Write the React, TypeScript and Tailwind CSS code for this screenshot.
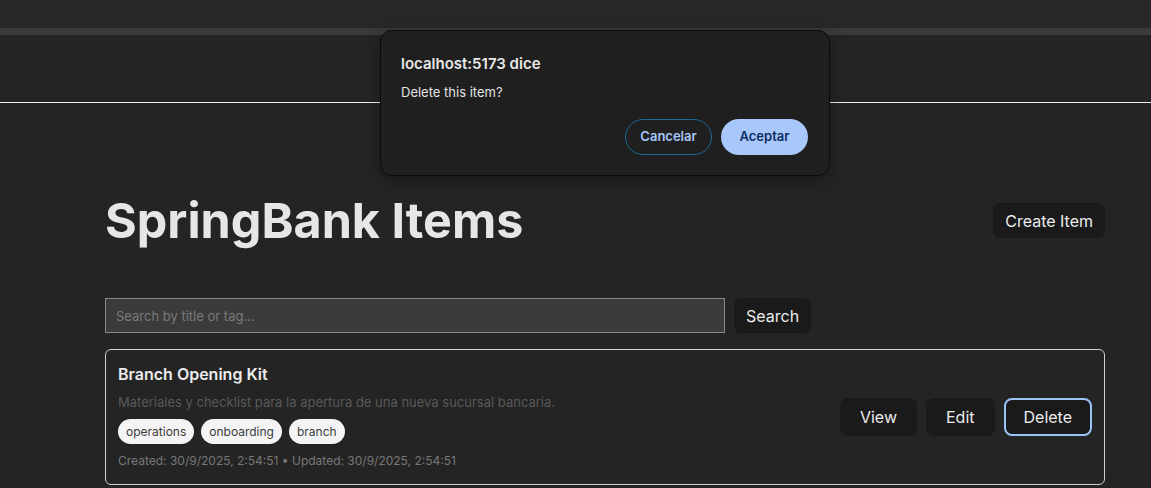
import { useState } from "react"

type Item = {
    id: number
    title: string
    description: string
    tags: string[]
    created: string
    updated: string
}

const items: Item[] = [
    {
        id: 1,
        title: 'Branch Opening Kit',
        description: 'Materiales y checklist para la apertura de una nueva sucursal bancaria.',
        tags: ['operations', 'onboarding', 'branch'],
        created: '30/9/2025, 2:54:51',
        updated: '30/9/2025, 2:54:51',
    },
]

function ConfirmDialog() {
    return (
        <div className="absolute left-[380px] top-[30px] w-[450px] h-[146px] rounded-[12px] bg-[#1f1f1f] border border-[#0b0b0b] shadow-[0_4px_16px_rgba(0,0,0,0.35)] px-[20px] pt-[22px]">
            <h2 className="text-[15px] font-semibold text-[#e8e8e8] leading-[22px]">localhost:5173 dice</h2>
            <p className="mt-[8px] text-[13px] text-[#e3e3e3] leading-[18px]">Delete this item?</p>
            <div className="flex justify-end gap-[9px] mt-[18px] pr-[1px]">
                <button className="w-[87px] h-[36px] rounded-full border border-[#1d6894] text-[#a8c7fa] text-[13px] font-semibold">
                    Cancelar
                </button>
                <button className="w-[87px] h-[36px] rounded-full bg-[#a8c7fa] text-[#0b2d63] text-[13px] font-semibold">
                    Aceptar
                </button>
            </div>
        </div>
    )
}

function ItemCard({ item }: { item: Item }) {
    return (
        <div className="flex items-center justify-between border border-[#cfcfcf] rounded-[6px] pl-[12px] pr-[12px] pt-[12px] pb-[14px]">
            <div>
                <h3 className="text-[16px] font-semibold text-[#ececec] leading-[24px]">{item.title}</h3>
                <p className="mt-[7px] text-[13px] text-[#595959] leading-[18px]">{item.description}</p>
                <div className="flex gap-[7px] mt-[8px]">
                    {item.tags.map(tag => (
                        <span
                            key={tag}
                            className="h-[25px] flex items-center px-[8px] rounded-full bg-[#f4f4f5] text-[#3b3b3b] text-[12px]"
                        >{tag}</span>
                    ))}
                </div>
                <p className="mt-[8px] text-[12px] text-[#787878] leading-[18px]">
                    Created: {item.created} • Updated: {item.updated}
                </p>
            </div>

            <div className="flex gap-[9px] mt-[1px]">
                <button className="h-[38px] px-[19px] rounded-[8px] bg-[#1a1a1a] text-[16px] text-[#ececec] border border-transparent">View</button>
                <button className="h-[38px] px-[19px] rounded-[8px] bg-[#1a1a1a] text-[16px] text-[#ececec] border border-transparent">Edit</button>
                <button className="h-[38px] px-[18px] rounded-[8px] bg-[#1a1a1a] text-[16px] text-[#ececec] border-2 border-[#9cc3f5]">Delete</button>
            </div>
        </div>
    )
}

export default function App() {
    const [search, setSearch] = useState('')

    return (
        <div className="relative min-h-[488px] h-[488px] overflow-hidden bg-[#242424] font-['Inter',sans-serif] text-[#ececec]">
            {/* barra del navegador */}
            <div className="h-[28px] bg-[#282828]" />
            <div className="h-[7px] bg-[#3a3a3a]" />

            <header className="h-[68px] border-b border-[#f2f2f2]" />

            <main className="ml-[105px] w-[1000px]">
                <div className="flex items-center justify-between mt-[91px]">
                    <h1 className="text-[48.5px] font-bold leading-[1.1] text-[#e6e6e6]">SpringBank Items</h1>
                    <button className="h-[35px] px-[12px] rounded-[7px] bg-[#1a1a1a] text-[16px] text-[#ececec]">Create Item</button>
                </div>

                <form
                    className="flex items-center gap-[9px] mt-[51px]"
                    onSubmit={e => e.preventDefault()}
                >
                    <input
                        type="text"
                        placeholder="Search by title or tag..."
                        value={search}
                        onChange={e => setSearch(e.target.value)}
                        className="w-[620px] h-[35px] bg-[#3b3b3b] border border-[#8a8a8a] px-[10px] text-[13px] text-[#ececec] placeholder:text-[#7a7a7a] focus:outline-none"
                    />
                    <button className="h-[35px] px-[12px] rounded-[7px] bg-[#1a1a1a] text-[16px] text-[#ececec]">Search</button>
                </form>

                <div className="mt-[16px]">
                    {items.map(item => (
                        <ItemCard key={item.id} item={item} />
                    ))}
                </div>
            </main>

            <ConfirmDialog />
        </div>
    )
}
